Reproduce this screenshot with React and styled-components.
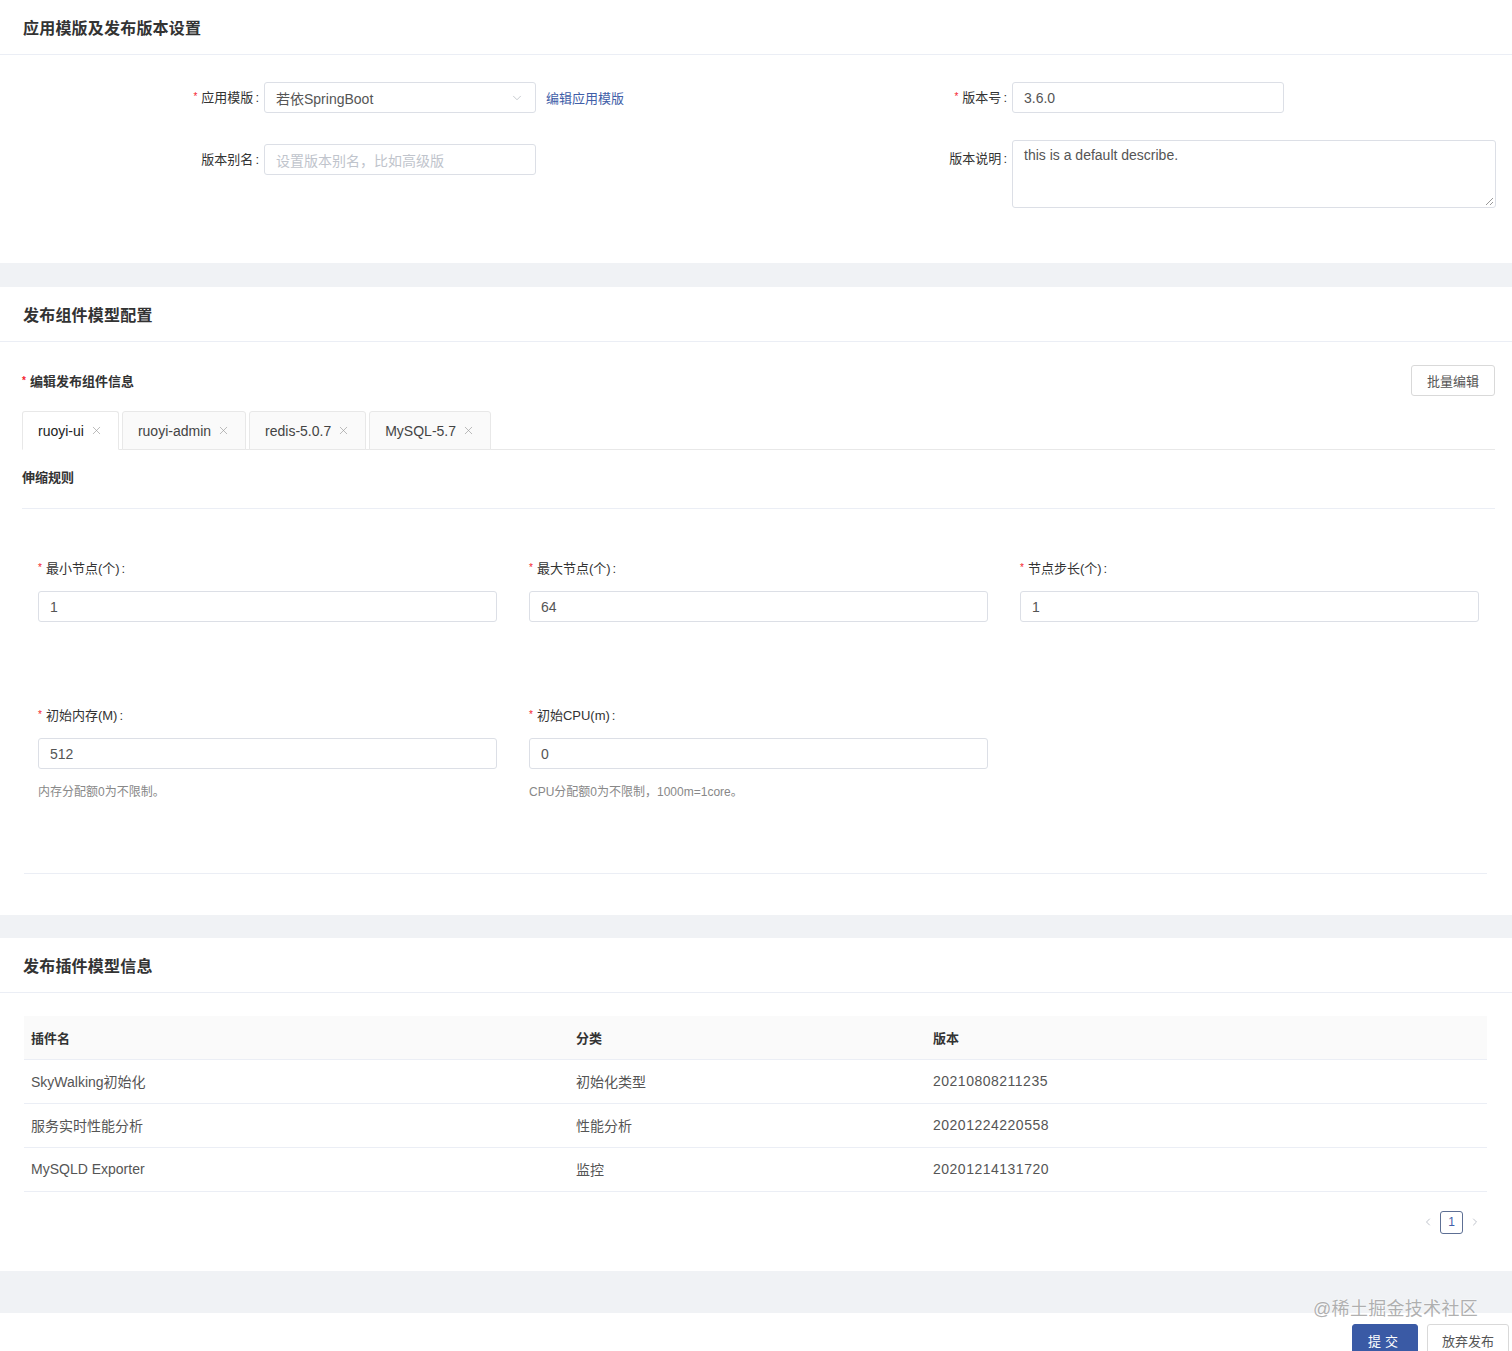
import styled, { createGlobalStyle } from "styled-components";
import { ChevronDown, ChevronLeft, ChevronRight, X } from "lucide-react";

const GlobalStyle = createGlobalStyle`
  * { box-sizing: border-box; }
  body {
    margin: 0;
    background: #f0f2f5;
    font-family: "Liberation Sans", "Noto Sans CJK SC", sans-serif;
    color: #333;
  }
`;

const Page = styled.div`
  position: relative;
  display: flex;
  flex-direction: column;
`;

const Card = styled.section`
  background: #fff;
  margin-bottom: ${(p) => p.mb || 0}px;
`;

const CardHeader = styled.div`
  height: ${(p) => p.h || 55}px;
  display: flex;
  align-items: center;
  padding: 0 23px;
  border-bottom: 1px solid #ebeef5;
  font-size: 16px;
  font-weight: 600;
  color: #333;
  letter-spacing: 0.2px;
`;

const CardBody = styled.div`
  padding: ${(p) => p.pad};
`;

/* ---------- section 1 ---------- */
const TwoCols = styled.div`
  display: grid;
  grid-template-columns: 756px 1fr;
`;

const Col = styled.div`
  display: flex;
  flex-direction: column;
  gap: ${(p) => p.gap}px;
`;

const Row = styled.div`
  display: flex;
  align-items: ${(p) => (p.top ? "flex-start" : "center")};
`;

const Label = styled.label`
  width: ${(p) => p.w}px;
  flex: none;
  text-align: right;
  padding-right: 5px;
  padding-top: ${(p) => (p.top ? 10 : 0)}px;
  font-size: 13px;
  line-height: 18px;
  color: #333;
`;

const Colon = styled.span`
  margin-left: 2px;
`;

const Star = styled.span`
  color: #f5222d;
  font-size: 10px;
  margin-right: 4px;
  vertical-align: 2px;
`;

const Input = styled.div`
  width: ${(p) => p.w || "100%"};
  height: 31px;
  border: 1px solid #dcdfe6;
  border-radius: 3px;
  background: #fff;
  display: flex;
  align-items: center;
  justify-content: space-between;
  padding: 0 11px;
  font-size: 14px;
  color: ${(p) => (p.placeholder ? "#c0c4cc" : "#555")};
`;

const TextArea = styled.div`
  position: relative;
  width: 484px;
  height: 68px;
  border: 1px solid #dcdfe6;
  border-radius: 3px;
  padding: 6px 11px;
  font-size: 14px;
  color: #555;
`;

const Grip = styled.span`
  position: absolute;
  right: 2px;
  bottom: 2px;
  width: 7px;
  height: 7px;
  background: linear-gradient(135deg, transparent 45%, #999 45%, #999 55%, transparent 55%, transparent 75%, #999 75%, #999 85%, transparent 85%);
`;

const Link = styled.a`
  margin-left: 10px;
  font-size: 13px;
  color: #3f5ea8;
  cursor: pointer;
`;

/* ---------- section 2 ---------- */
const TitleRow = styled.div`
  display: flex;
  align-items: center;
  justify-content: space-between;
  height: 31px;
`;

const SubTitle = styled.div`
  font-size: 13px;
  font-weight: 600;
  color: #333;
`;

const Button = styled.button`
  height: ${(p) => p.h || 31}px;
  padding: 0 ${(p) => p.px || 14}px;
  border-radius: 3px;
  border: 1px solid ${(p) => (p.primary ? "#3a5aa5" : "#d9d9d9")};
  background: ${(p) => (p.primary ? "#3a5aa5" : "#fff")};
  color: ${(p) => (p.primary ? "#fff" : "#555")};
  font-family: inherit;
  font-size: 13px;
  letter-spacing: ${(p) => p.ls || 0}px;
  cursor: pointer;
`;

const TabBar = styled.div`
  margin-top: 15px;
  display: flex;
  gap: 3px;
  border-bottom: 1px solid #e8e8e8;
  height: 39px;
  align-items: flex-end;
`;

const Tab = styled.div`
  height: 39px;
  margin-bottom: -1px;
  display: flex;
  align-items: center;
  gap: 6px;
  padding: 0 15px;
  border: 1px solid #e8e8e8;
  border-bottom-color: ${(p) => (p.active ? "#fff" : "#e8e8e8")};
  border-radius: 3px 3px 0 0;
  background: ${(p) => (p.active ? "#fff" : "#fafafa")};
  font-size: 14px;
  color: ${(p) => (p.active ? "#222" : "#444")};
  font-weight: ${(p) => (p.active ? 500 : 400)};
`;

const RuleTitle = styled.div`
  font-size: 13px;
  font-weight: 600;
  padding: 17px 0 22px;
  border-bottom: 1px solid #ebeef5;
`;

const FieldGrid = styled.div`
  display: grid;
  grid-template-columns: repeat(3, 459px);
  column-gap: 32px;
  row-gap: 84px;
  padding: 50px 0 0 16px;
`;

const Field = styled.div`
  display: flex;
  flex-direction: column;
  gap: 13px;
`;

const FieldLabel = styled.div`
  font-size: 13px;
  line-height: 18px;
  color: #333;
`;

const Help = styled.div`
  font-size: 12px;
  line-height: 18px;
  color: #888;
  margin-top: 1px;
`;

const Divider = styled.div`
  margin: ${(p) => p.m};
  border-top: 1px solid #ebeef5;
`;

const Spacer = styled.div`
  height: ${(p) => p.h}px;
`;

/* ---------- section 3 ---------- */
const TableWrap = styled.div`
  padding: 0 25px 0 24px;
`;

const Table = styled.table`
  width: 100%;
  border-collapse: collapse;
  font-size: 14px;
`;

const Th = styled.th`
  text-align: left;
  font-weight: 600;
  font-size: 13px;
  color: #333;
  background: #fafafa;
  height: 43px;
  padding: 0 7px;
  width: ${(p) => p.w || "auto"};
  border-bottom: 1px solid #ebeef5;
`;

const Td = styled.td`
  height: 44px;
  padding: 0 7px;
  color: #555;
  letter-spacing: ${(p) => p.ls || 0}px;
  border-bottom: 1px solid #ebeef5;
`;

const Pager = styled.div`
  display: flex;
  justify-content: flex-end;
  align-items: center;
  gap: 6px;
  padding: 19px 31px 0 0;
  color: #c0c4cc;
`;

const PageNo = styled.div`
  width: 23px;
  height: 23px;
  border: 1px solid #5d6f94;
  border-radius: 3px;
  display: flex;
  align-items: center;
  justify-content: center;
  font-size: 12px;
  color: #3f5ea8;
`;

const Footer = styled.div`
  background: #fff;
  height: 50px;
  display: flex;
  justify-content: flex-end;
  align-items: flex-start;
  gap: 9px;
  padding: 11px 3px 0 0;
`;

const Watermark = styled.div`
  position: absolute;
  right: 34px;
  bottom: 43px;
  font-size: 18px;
  color: rgba(150, 150, 150, 0.75);
  text-shadow: 0 0 2px #fff;
  letter-spacing: 0.3px;
`;

const tabs = ["ruoyi-ui", "ruoyi-admin", "redis-5.0.7", "MySQL-5.7"];
const plugins = [
  ["SkyWalking初始化", "初始化类型", "20210808211235"],
  ["服务实时性能分析", "性能分析", "20201224220558"],
  ["MySQLD Exporter", "监控", "20201214131720"],
];

export default function App() {
  return (
    <>
      <GlobalStyle />
      <Page>
        <Card mb={24}>
          <CardHeader h={55}>应用模版及发布版本设置</CardHeader>
          <CardBody pad="27px 0 55px">
            <TwoCols>
              <Col gap={31}>
                <Row>
                  <Label w={264}><Star>*</Star>应用模版<Colon>:</Colon></Label>
                  <Input w="272px">
                    若依SpringBoot
                    <ChevronDown size={14} strokeWidth={1.2} color="#b0b4bc" />
                  </Input>
                  <Link>编辑应用模版</Link>
                </Row>
                <Row>
                  <Label w={264}>版本别名<Colon>:</Colon></Label>
                  <Input w="272px" placeholder>设置版本别名，比如高级版</Input>
                </Row>
              </Col>
              <Col gap={27}>
                <Row>
                  <Label w={256}><Star>*</Star>版本号<Colon>:</Colon></Label>
                  <Input w="272px">3.6.0</Input>
                </Row>
                <Row top>
                  <Label w={256} top>版本说明<Colon>:</Colon></Label>
                  <TextArea>
                    this is a default describe.
                    <Grip />
                  </TextArea>
                </Row>
              </Col>
            </TwoCols>
          </CardBody>
        </Card>

        <Card mb={23}>
          <CardHeader h={55}>发布组件模型配置</CardHeader>
          <CardBody pad="23px 17px 0 22px">
            <TitleRow>
              <SubTitle><Star>*</Star>编辑发布组件信息</SubTitle>
              <Button px={15}>批量编辑</Button>
            </TitleRow>
            <TabBar>
              {tabs.map((t, i) => (
                <Tab key={t} active={i === 0}>
                  {t}
                  <X size={13} strokeWidth={1.2} color="#999" />
                </Tab>
              ))}
            </TabBar>
            <RuleTitle>伸缩规则</RuleTitle>
            <FieldGrid>
              <Field>
                <FieldLabel><Star>*</Star>最小节点(个)<Colon>:</Colon></FieldLabel>
                <Input>1</Input>
              </Field>
              <Field>
                <FieldLabel><Star>*</Star>最大节点(个)<Colon>:</Colon></FieldLabel>
                <Input>64</Input>
              </Field>
              <Field>
                <FieldLabel><Star>*</Star>节点步长(个)<Colon>:</Colon></FieldLabel>
                <Input>1</Input>
              </Field>
              <Field>
                <FieldLabel><Star>*</Star>初始内存(M)<Colon>:</Colon></FieldLabel>
                <Input>512</Input>
                <Help>内存分配额0为不限制。</Help>
              </Field>
              <Field>
                <FieldLabel><Star>*</Star>初始CPU(m)<Colon>:</Colon></FieldLabel>
                <Input>0</Input>
                <Help>CPU分配额0为不限制，1000m=1core。</Help>
              </Field>
            </FieldGrid>
            <Divider m="72px 8px 0 2px" />
            <Spacer h={41} />
          </CardBody>
        </Card>

        <Card mb={42}>
          <CardHeader h={55}>发布插件模型信息</CardHeader>
          <CardBody pad="23px 0 37px">
            <TableWrap>
              <Table>
                <thead>
                  <tr>
                    <Th w="545px">插件名</Th>
                    <Th w="357px">分类</Th>
                    <Th>版本</Th>
                  </tr>
                </thead>
                <tbody>
                  {plugins.map((r) => (
                    <tr key={r[0]}>
                      <Td>{r[0]}</Td>
                      <Td>{r[1]}</Td>
                      <Td ls={0.5}>{r[2]}</Td>
                    </tr>
                  ))}
                </tbody>
              </Table>
            </TableWrap>
            <Pager>
              <ChevronLeft size={12} />
              <PageNo>1</PageNo>
              <ChevronRight size={12} />
            </Pager>
          </CardBody>
        </Card>

        <Footer>
          <Button primary h={34} px={15} ls={4}>提交</Button>
          <Button h={34} px={14}>放弃发布</Button>
        </Footer>
        <Watermark>@稀土掘金技术社区</Watermark>
      </Page>
    </>
  );
}
